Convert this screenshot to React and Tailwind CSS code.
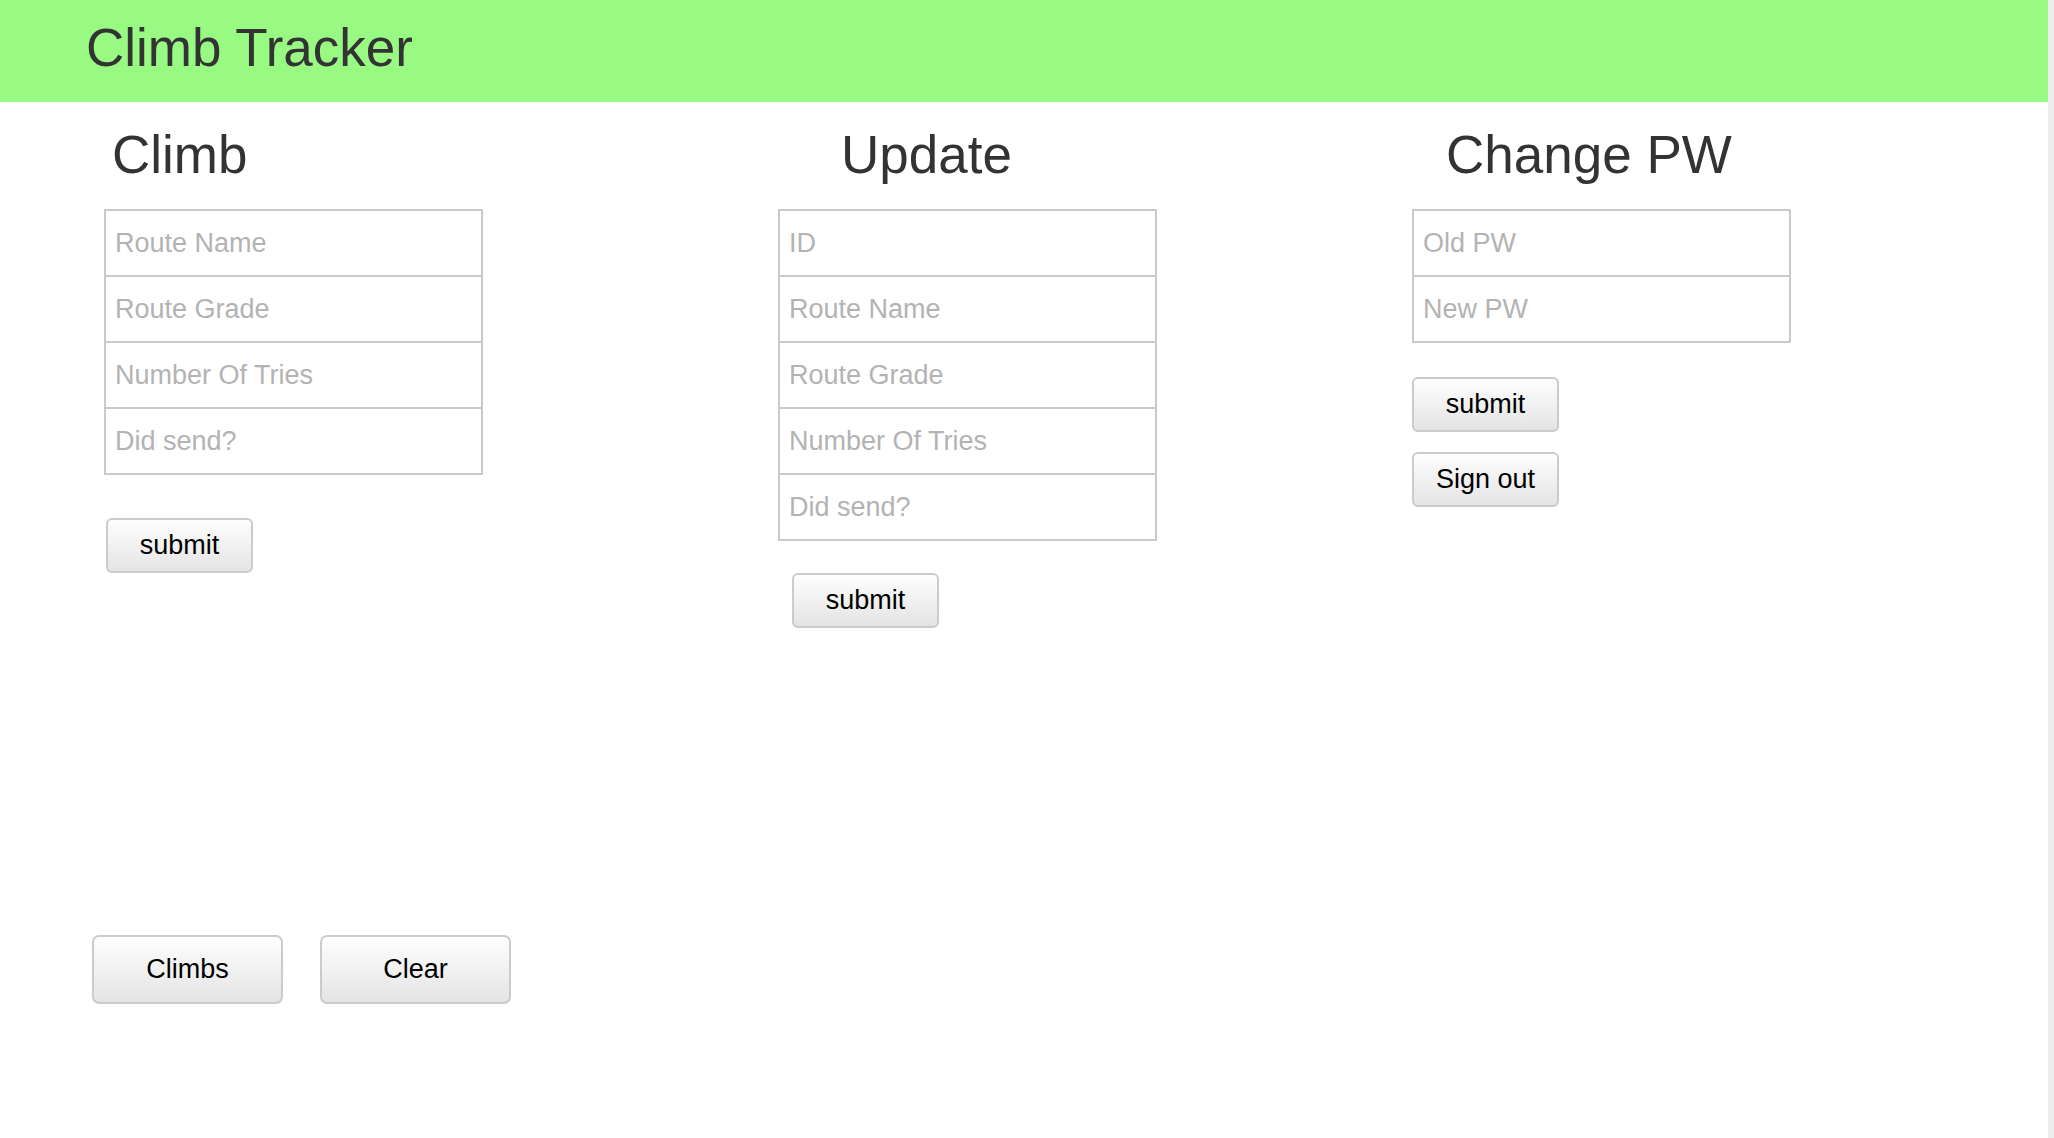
import { useState } from 'react';

const climbFields = ['Route Name', 'Route Grade', 'Number Of Tries', 'Did send?'];
const updateFields = ['ID', 'Route Name', 'Route Grade', 'Number Of Tries', 'Did send?'];
const pwFields = ['Old PW', 'New PW'];

function Fields({ items, values, onChange }) {
  return (
    <div className="flex flex-col">
      {items.map((p) => (
        <input
          key={p}
          placeholder={p}
          value={values[p] || ''}
          onChange={(e) => onChange({ ...values, [p]: e.target.value })}
          className="block w-[379px] h-[68px] -mt-[2px] first:mt-0 border-2 border-[#c9c9c9] bg-white pl-[9px] text-[27px] text-[#333] outline-none placeholder:text-[#b3b3b3]"
        />
      ))}
    </div>
  );
}

function Btn({ children, className = '' }) {
  return (
    <button
      className={`block w-[147px] h-[55px] rounded-[6px] border-2 border-[#cbcbcb] bg-linear-to-b from-[#fefefe] to-[#e4e4e4] text-[27px] text-black ${className}`}
    >
      {children}
    </button>
  );
}

export default function App() {
  const [climb, setClimb] = useState({});
  const [update, setUpdate] = useState({});
  const [pw, setPw] = useState({});

  return (
    <div className="min-h-screen flex bg-white font-['Liberation_Sans',Arial,sans-serif]">
      <div className="flex-1 flex flex-col">
        <header className="h-[102px] bg-[#98f983] pl-[86px] pt-[18px]">
          <h1 className="text-[53px] leading-[60px] text-[#333]">Climb Tracker</h1>
        </header>

        <main className="flex items-start pt-[23px]">
          <section className="ml-[104px] w-[674px]">
            <h2 className="pl-[8px] mb-[24px] text-[53px] leading-[60px] text-[#333]">Climb</h2>
            <Fields items={climbFields} values={climb} onChange={setClimb} />
            <Btn className="mt-[43px] ml-[2px]">submit</Btn>
          </section>

          <section className="w-[634px]">
            <h2 className="pl-[63px] mb-[24px] text-[53px] leading-[60px] text-[#333]">Update</h2>
            <Fields items={updateFields} values={update} onChange={setUpdate} />
            <Btn className="mt-[32px] ml-[14px]">submit</Btn>
          </section>

          <section>
            <h2 className="pl-[34px] mb-[24px] text-[53px] leading-[60px] text-[#333]">Change PW</h2>
            <Fields items={pwFields} values={pw} onChange={setPw} />
            <Btn className="mt-[34px]">submit</Btn>
            <Btn className="mt-[20px]">Sign out</Btn>
          </section>
        </main>

        <div className="flex gap-[37px] ml-[92px] mt-[307px]">
          <button className="w-[191px] h-[69px] rounded-[7px] border-2 border-[#cbcbcb] bg-linear-to-b from-[#fefefe] to-[#e4e4e4] text-[27px] text-black">
            Climbs
          </button>
          <button className="w-[191px] h-[69px] rounded-[7px] border-2 border-[#cbcbcb] bg-linear-to-b from-[#fefefe] to-[#e4e4e4] text-[27px] text-black">
            Clear
          </button>
        </div>
      </div>
      <div className="w-[6px] bg-[#ededed]" />
    </div>
  );
}
